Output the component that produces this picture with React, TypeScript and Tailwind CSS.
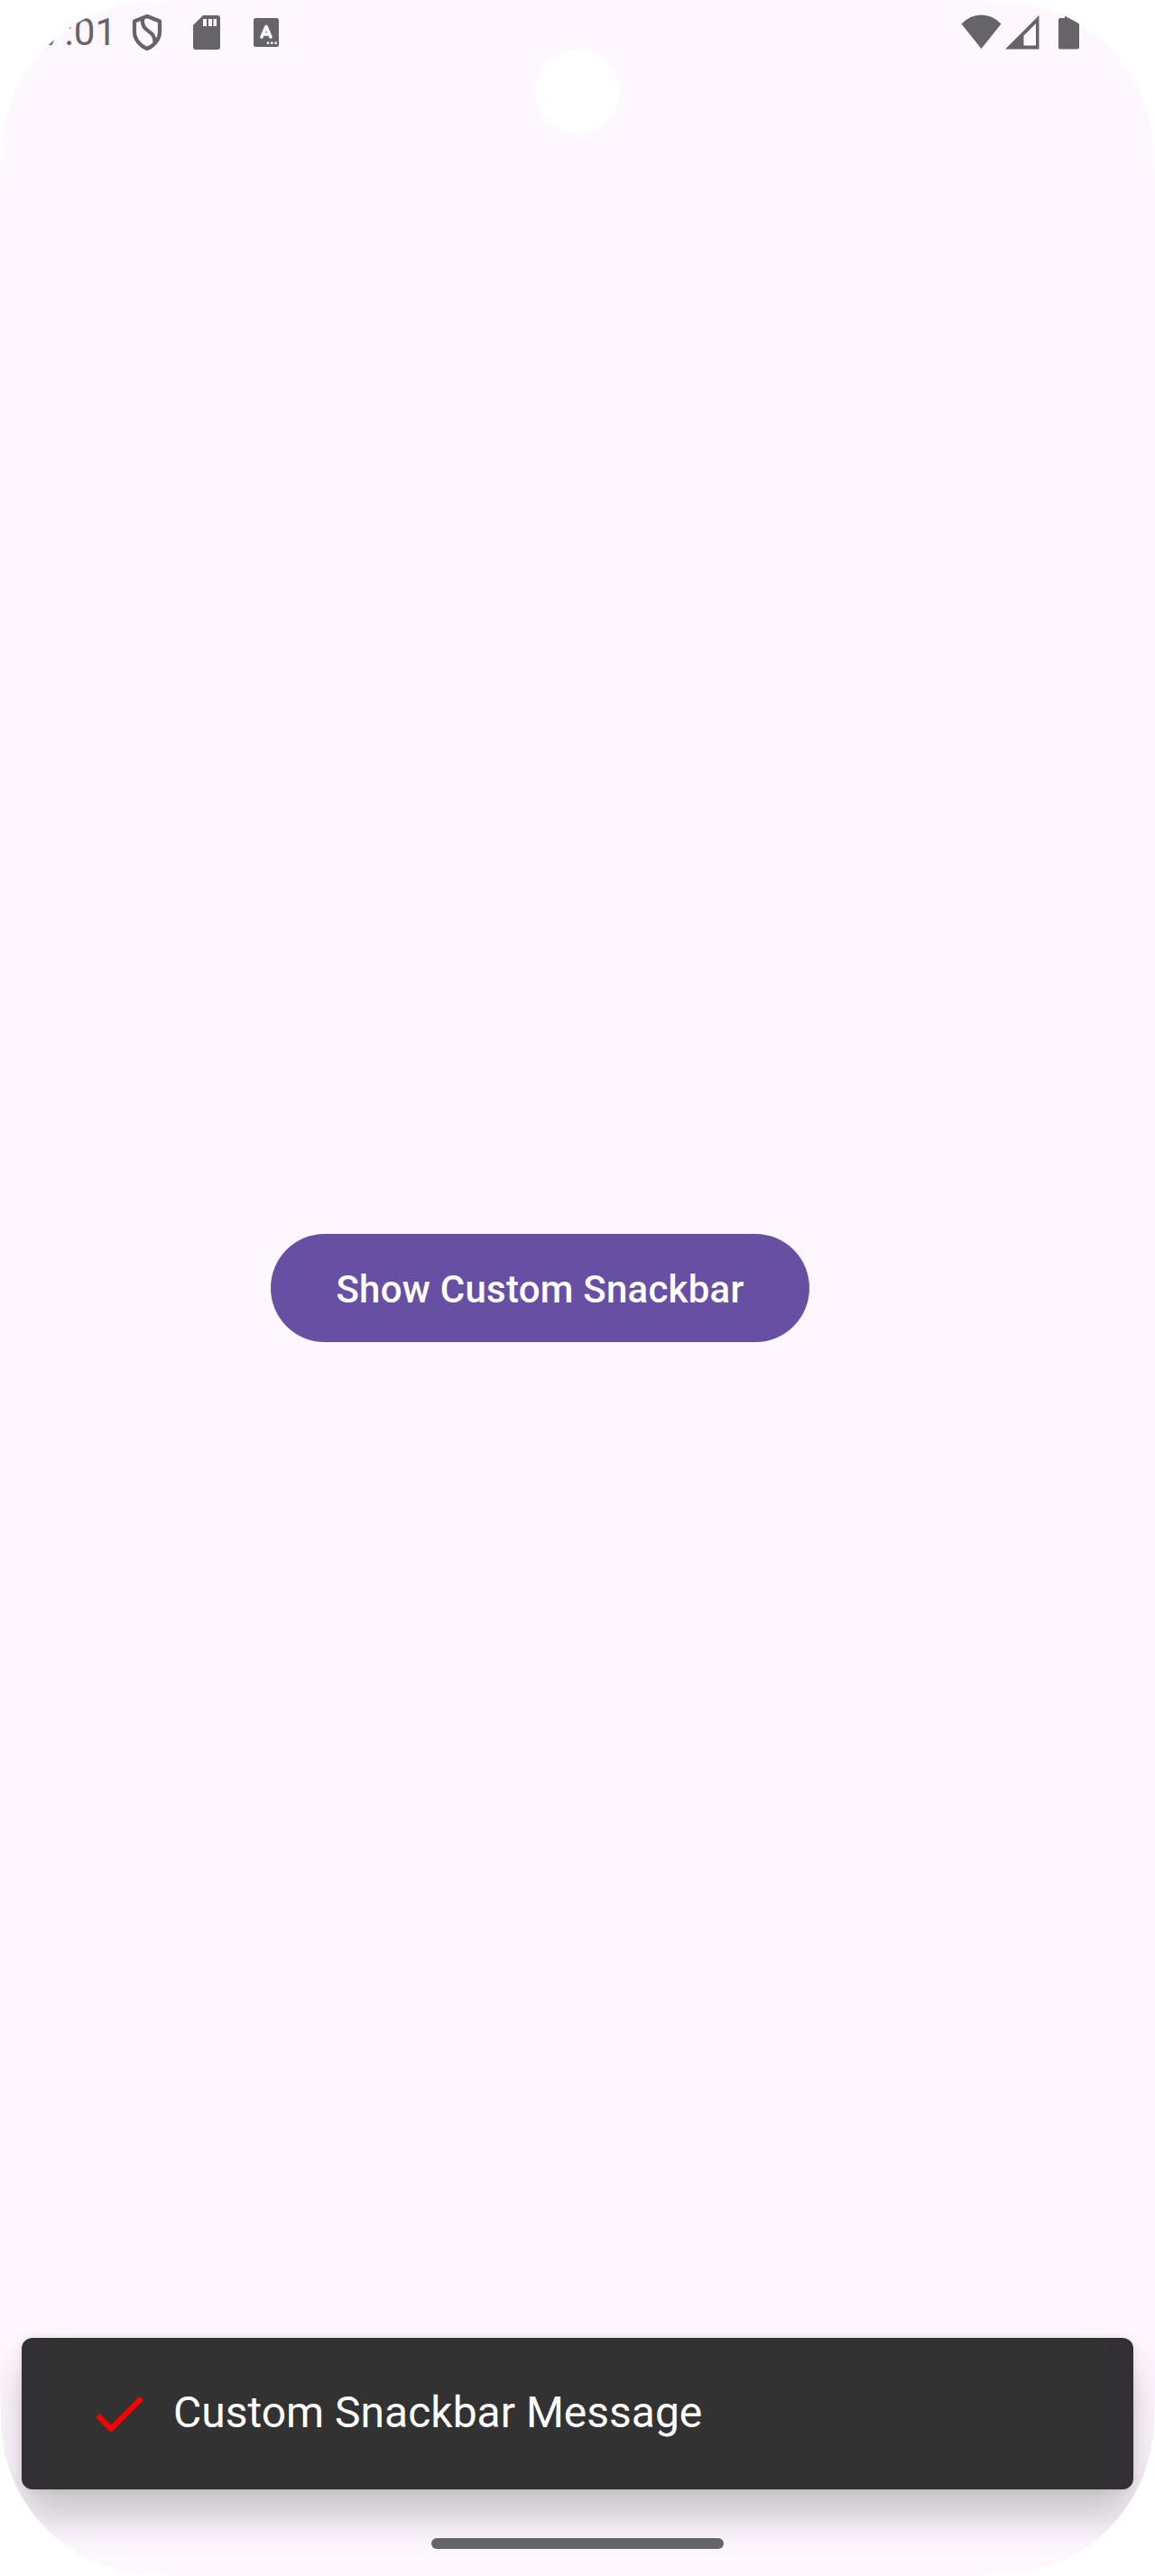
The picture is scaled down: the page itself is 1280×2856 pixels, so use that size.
const corners =
  "[clip-path:path('M0_213_L1_174_C1_79_79_1_174_1_L205_0_H1075_L1106_1_C1201_1_1279_79_1279_174_L1280_213_V2643_L1279_2682_C1279_2777_1201_2855_1106_2855_L1075_2856_H205_L174_2855_C79_2855_1_2777_1_2682_L0_2643_Z')]";

function StatusBar() {
  return (
    <header className="flex h-[72px] items-start justify-between pl-[48px] pr-[84px] text-[#666468]">
      <div className="flex items-start">
        <span className="mt-[11px] w-[98px] text-[42px] leading-[49px]">7:01</span>
        <svg className="mt-[15px] h-[42px] w-[34px]" viewBox="0 0 34 42" fill="none" stroke="currentColor" strokeWidth="4.2" strokeLinejoin="round">
          <path d="M17 3 L31 8.5 V20 C31 29 24.5 36 17 39 C9.5 36 3 29 3 20 V8.500 Z" />
          <path d="M12 5 C10 22 26 17 25.500 32" />
        </svg>
        <svg className="ml-[34px] mt-[17px] h-[38px] w-[30px]" viewBox="0 0 30 38" fill="currentColor">
          <path fillRule="evenodd" d="M11 0H27Q30 0 30 3V35Q30 38 27 38H3Q0 38 0 35V11ZM11 4V12H15V4ZM17 4V12H21V4ZM22.500 4V12H26V4Z" />
        </svg>
        <svg className="ml-[37px] mt-[20px] h-[32px] w-[28px]" viewBox="0 0 28 32">
          <rect width="28" height="32" rx="2.500" fill="currentColor" />
          <path d="M9 21 L14 9.500 L19 21 M10.500 18 H17.500" fill="none" stroke="#fef7ff" strokeWidth="3.600" strokeLinecap="round" strokeLinejoin="round" />
          <path d="M16 27.700H16.010M20.300 27.700H20.310M24.600 27.700H24.610" stroke="#fef7ff" strokeWidth="2.800" strokeLinecap="round" />
        </svg>
      </div>
      <div className="flex items-start">
        <svg className="mt-[16px] h-[39px] w-[46px]" viewBox="0 0 46 39" fill="currentColor">
          <path d="M22.500 38 L0.500 10.500 Q10 0.500 22.500 0.500 Q35 0.500 44.500 10.500 Z" />
        </svg>
        <svg className="ml-[3px] mt-[17px] h-[38px] w-[38px]" viewBox="0 0 38 38" fill="currentColor">
          <path fillRule="evenodd" d="M37.500 0V37.500H0ZM34 9L20.500 22.500V33.500H34Z" />
        </svg>
        <svg className="ml-[21px] mt-[16px] h-[39px] w-[23px]" viewBox="0 0 23 39" fill="currentColor">
          <path d="M7 0H16V4H21Q23 4 23 6V36.500Q23 38.500 21 38.500H2Q0 38.500 0 36.500V6Q0 4 2 4H7Z" />
        </svg>
      </div>
    </header>
  );
}

function Snackbar() {
  return (
    <div className="mx-6 h-[168px] rounded-[12px] bg-[#322f35] px-6 shadow-[0_31px_44px_rgba(0,0,0,0.21),0_0_10px_rgba(0,0,0,0.09)]">
      <div className="flex h-full items-center gap-6 rounded-[24px] bg-[#323232] pl-12">
        <svg className="h-[72px] w-[72px]" viewBox="0 0 24 24" fill="#ff0000">
          <path d="M9 16.170L4.830 12l-1.420 1.410L9 19 21 7l-1.410-1.410z" />
        </svg>
        <span className="pb-[3px] text-[48px] leading-[56px] text-white">Custom Snackbar Message</span>
      </div>
    </div>
  );
}

export default function App() {
  return (
    <div className="h-[2856px] w-[1280px] bg-white font-['Roboto',sans-serif]">
      <div className={`relative flex h-full w-full flex-col bg-[#fef7ff] ${corners}`}>
        <StatusBar />
        <div className="absolute left-[594px] top-[55px] h-[93px] w-[93px] rounded-full bg-white" />
        <main className="flex grow flex-col items-start pl-[300px] pt-[1296px]">
          <button className="h-[120px] w-[597px] rounded-full bg-[#6750a4] pt-[3px] text-[42px] font-medium tracking-[0.24px] text-white">
            Show Custom Snackbar
          </button>
        </main>
        <Snackbar />
        <footer className="flex h-[96px] items-start justify-center pt-[54px]">
          <div className="h-[12px] w-[324px] rounded-full bg-[#666468]" />
        </footer>
      </div>
    </div>
  );
}
